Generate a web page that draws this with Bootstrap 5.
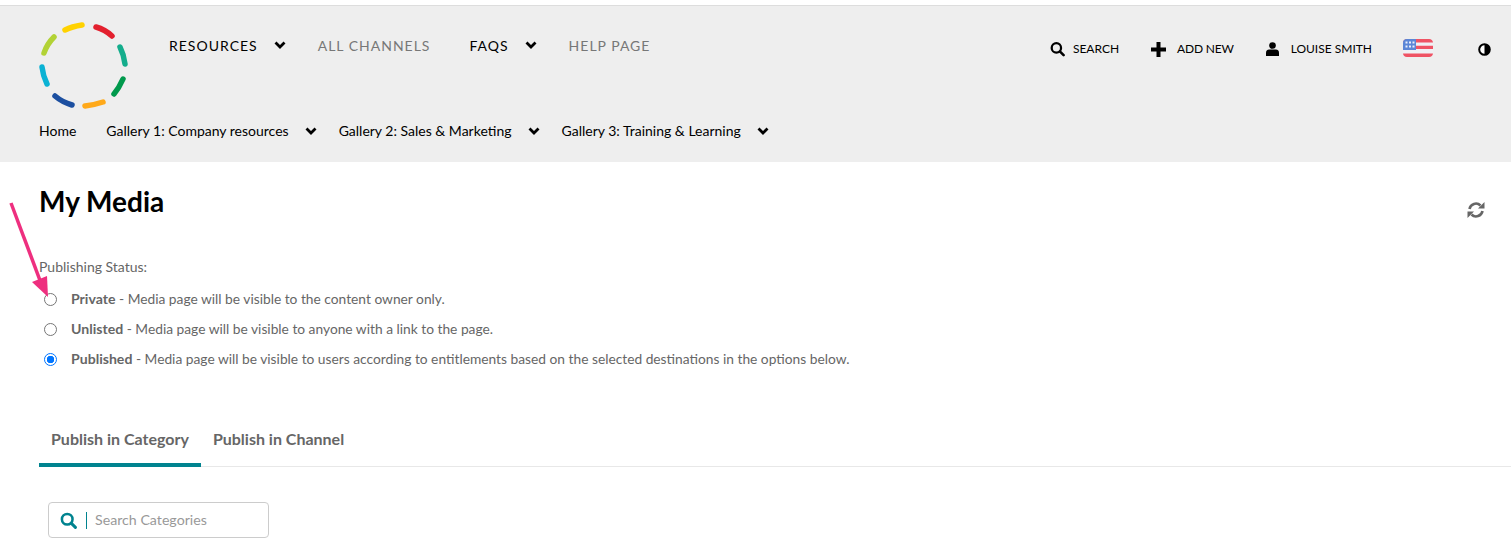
<!DOCTYPE html>
<html lang="en">
<head>
<meta charset="utf-8">
<title>My Media</title>
<link href="https://cdn.jsdelivr.net/npm/bootstrap@5.3.0/dist/css/bootstrap.min.css" rel="stylesheet">
<style>
html,body{height:545px;overflow:hidden}
body{font-family:Lato,"Liberation Sans",sans-serif;color:#666;font-size:14px;background:#fff;position:relative}
.site-head{margin-top:5px;height:157px;background:#eee;border-top:1px solid #ddd;padding-left:39px}
.head-top{height:100px}
.brand-logo{width:90px;height:90px;margin-top:15px;flex:none}
.primary-nav{margin-left:40px;padding-top:30px;letter-spacing:1px;line-height:20px}
.primary-nav a{text-decoration:none;color:#000}
.primary-nav a.dim{color:#777}
.chev{width:12px;height:8px;display:block;flex:none}
.primary-nav .chev{margin:5px 32px 0 16px}
.primary-nav .far{margin-right:39px}
.tools{font-size:12px;line-height:16px;padding-top:35px;margin-left:auto;padding-right:20px;gap:32px}
.tools a{color:#000;text-decoration:none}
.tools a.tight{letter-spacing:-.2px}
.tools svg{flex:none}
.tools .flag-icon{margin:-2px 0 0 -1px}
.tools .tone-icon{margin:2px 0 0 13px}
.tools .gap-a{margin-right:11px}
.tools .gap-b{margin-right:12px}
.gallery-nav{line-height:20px;margin-top:15px}
.gallery-nav a{color:#000;text-decoration:none}
.gallery-nav .home-link{margin-right:30px}
.gallery-nav .chev{margin:0 22px 0 16px}
.page-body{padding-left:39px}
.page-title{font-size:28px;font-weight:700;color:#000;margin:0;line-height:34px;padding-top:22px}
.sync{margin:39px 26px 0 0;width:18px;height:18px;flex:none}
.status-label{margin:38px 0 0;line-height:20px;color:#666}
.status-list{margin-top:7px}
.status-item{height:30px;margin:0;padding-left:5px;color:#666;font-size:13.78px}
.status-item b{font-size:14.1px}
.status-item .form-check-input{width:13px;height:13px;margin:0 14px 0 0;border:1px solid #767676;flex:none}
.status-item .form-check-input:checked{background-color:#fff;border-color:#0075ff;background-image:radial-gradient(circle,#0075ff 0 3.5px,#fff 4px)}
.tabs-row{margin-top:52px;border-bottom:1px solid #e8e8e8;height:41px}
.tab-link{font-size:16px;font-weight:700;color:#666;text-decoration:none;padding:0 12px;height:41px;line-height:26px;border-bottom:4px solid transparent}
.tab-link.on{border-bottom-color:#00838f}
.cat-search{width:221px;height:36px;margin:35px 0 0 9px;border:1px solid #ccc;border-radius:4px;padding-left:11px;background:#fff}
.cat-search .divide{width:1px;height:17px;background:#00838f;margin:0 8px 0 9px}
.cat-search .ph{color:#999;font-size:14.200px}
.pink-arrow{position:absolute;left:0;top:195px;width:60px;height:110px;pointer-events:none}
</style>
</head>
<body>
<header class="site-head">
  <div class="head-top d-flex">
    <svg class="brand-logo" viewBox="39 21 90 90" fill="none" stroke-width="5.500" stroke-linecap="round">
      <path d="M65 30Q72 26.500 82 25" stroke="#ffd200"/>
      <path d="M96 27Q105 29.500 112 36" stroke="#e3202e"/>
      <path d="M120 47Q124 55 125 64" stroke="#14ad8c"/>
      <path d="M123 79Q119 88 114 94" stroke="#00994c"/>
      <path d="M85 106Q94 105 103 102" stroke="#ffa91a"/>
      <path d="M55 96Q62 102 72 105" stroke="#1c4fa0"/>
      <path d="M42 67Q43 76 47 84" stroke="#0bb2d4"/>
      <path d="M44 53Q47 44 54 37" stroke="#b2d235"/>
    </svg>
    <nav class="primary-nav d-flex align-items-start">
      <a href="#">RESOURCES</a>
      <svg class="chev" viewBox="0 0 12 8"><path d="M1.500 1.500 6 6l4.500-4.500" fill="none" stroke="#000" stroke-width="2.800"/></svg>
      <a href="#" class="dim far">ALL CHANNELS</a>
      <a href="#">FAQS</a>
      <svg class="chev" viewBox="0 0 12 8"><path d="M1.500 1.500 6 6l4.500-4.500" fill="none" stroke="#000" stroke-width="2.800"/></svg>
      <a href="#" class="dim">HELP PAGE</a>
    </nav>
    <div class="tools d-flex align-items-start">
      <a href="#" class="d-flex align-items-center"><svg width="15" height="16" viewBox="0 0 16 16" class="me-2"><circle cx="6.800" cy="6.800" r="5" fill="none" stroke="#000" stroke-width="2.400"/><path d="M10.500 10.500 14.500 14.500" stroke="#000" stroke-width="2.800" stroke-linecap="round"/></svg>SEARCH</a>
      <a href="#" class="d-flex align-items-center tight"><svg class="gap-a" width="15" height="15" viewBox="0 0 15 15"><path d="M5.500 0h4v5.500H15v4H9.500V15h-4V9.500H0v-4h5.500z"/></svg>ADD NEW</a>
      <a href="#" class="d-flex align-items-center"><svg class="gap-b" width="13" height="14" viewBox="0 0 13 14"><circle cx="6.500" cy="3.500" r="3.300"/><path d="M0 14V10.500C0 8.500 1.500 7.500 3 7.500h7c1.500 0 3 1 3 3V14z"/></svg>LOUISE SMITH</a>
      <svg class="flag-icon" width="30" height="18" viewBox="0 0 30 18"><rect width="30" height="18" rx="4" fill="#f0f0f4"/><path d="M4 0h22a4 4 0 0 1 4 3.500H0A4 4 0 0 1 4 0zM13 6.800h17v3.200H13zM0 14.500h30A4 4 0 0 1 26 18H4a4 4 0 0 1-4-3.500z" fill="#ef5364"/><path d="M4 0h9v11H0V4a4 4 0 0 1 4-4z" fill="#5b86d6"/><path d="M2.500 2.500h2v2h-2zM6 2.500h2v2H6zM9.500 2.500h2v2h-2zM2.500 6.500h2v2h-2zM6 6.500h2v2H6zM9.500 6.500h2v2h-2z" fill="#e8eefb"/></svg>
      <svg class="tone-icon" width="13" height="13" viewBox="0 0 13 13"><circle cx="6.500" cy="6.500" r="5.300" fill="#fff" stroke="#000" stroke-width="2"/><path d="M6.500 1a5.500 5.500 0 0 1 0 11z"/></svg>
    </div>
  </div>
  <nav class="gallery-nav d-flex align-items-center">
    <a href="#" class="home-link">Home</a>
    <a href="#">Gallery 1: Company resources</a>
    <svg class="chev" viewBox="0 0 12 8"><path d="M1.500 1.500 6 6l4.500-4.500" fill="none" stroke="#000" stroke-width="2.800"/></svg>
    <a href="#">Gallery 2: Sales &amp; Marketing</a>
    <svg class="chev" viewBox="0 0 12 8"><path d="M1.500 1.500 6 6l4.500-4.500" fill="none" stroke="#000" stroke-width="2.800"/></svg>
    <a href="#">Gallery 3: Training &amp; Learning</a>
    <svg class="chev" viewBox="0 0 12 8"><path d="M1.500 1.500 6 6l4.500-4.500" fill="none" stroke="#000" stroke-width="2.800"/></svg>
  </nav>
</header>
<main class="page-body">
  <div class="d-flex justify-content-between align-items-start">
    <h1 class="page-title">My Media</h1>
    <svg class="sync" viewBox="0 0 18 18" fill="none"><path d="M2.500 8A6.500 6.500 0 0 1 13.500 4.500" stroke="#666" stroke-width="2.600"/><path d="M17.500 1v6.500h-6.500z" fill="#666"/><path d="M15.500 10A6.500 6.500 0 0 1 4.500 13.500" stroke="#666" stroke-width="2.600"/><path d="M.5 17v-6.500h6.500z" fill="#666"/></svg>
  </div>
  <p class="status-label">Publishing Status:</p>
  <div class="status-list">
    <label class="status-item d-flex align-items-center"><input class="form-check-input" type="radio" name="st"><span><b>Private</b> - Media page will be visible to the content owner only.</span></label>
    <label class="status-item d-flex align-items-center"><input class="form-check-input" type="radio" name="st"><span><b>Unlisted</b> - Media page will be visible to anyone with a link to the page.</span></label>
    <label class="status-item d-flex align-items-center"><input class="form-check-input" type="radio" name="st" checked><span><b>Published</b> - Media page will be visible to users according to entitlements based on the selected destinations in the options below.</span></label>
  </div>
  <div class="tabs-row d-flex">
    <a href="#" class="tab-link on">Publish in Category</a>
    <a href="#" class="tab-link">Publish in Channel</a>
  </div>
  <div class="cat-search d-flex align-items-center">
    <svg width="17" height="17" viewBox="0 0 16 16"><circle cx="6.800" cy="6.800" r="5" fill="none" stroke="#00838f" stroke-width="2.400"/><path d="M10.500 10.500 14.500 14.500" stroke="#00838f" stroke-width="2.800" stroke-linecap="round"/></svg>
    <span class="divide"></span>
    <span class="ph">Search Categories</span>
  </div>
</main>
<svg class="pink-arrow" viewBox="0 195 60 110"><path d="M11 203 41 283" stroke="#ee2f7f" stroke-width="3.500"/><path d="M48 297 32 282 47 276z" fill="#ee2f7f"/></svg>
</body>
</html>
